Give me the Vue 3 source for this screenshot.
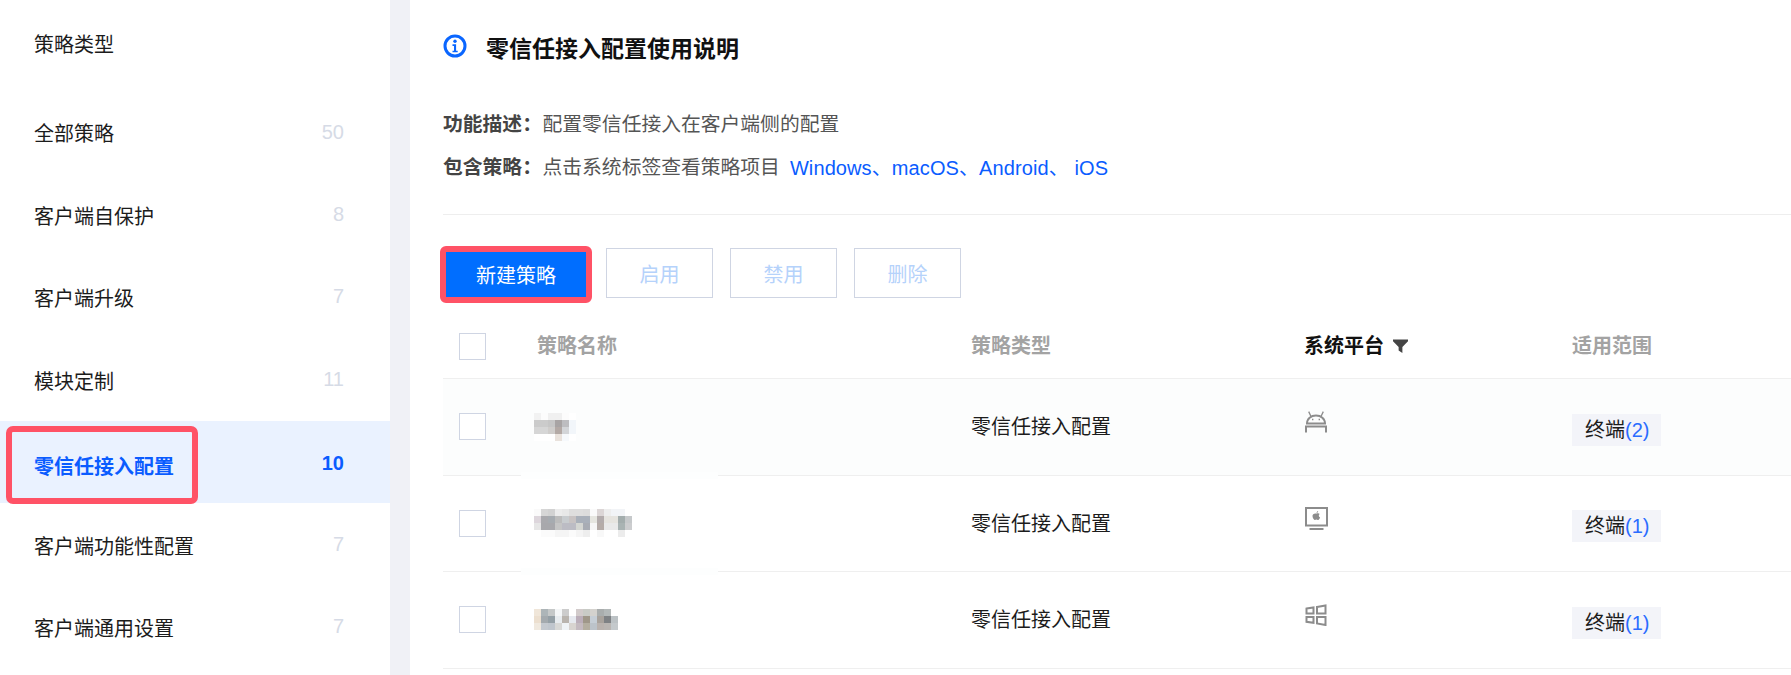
<script setup>
const menu = [
  { name: '全部策略', count: 50 },
  { name: '客户端自保护', count: 8 },
  { name: '客户端升级', count: 7 },
  { name: '模块定制', count: 11 },
  { name: '零信任接入配置', count: 10, active: true },
  { name: '客户端功能性配置', count: 7 },
  { name: '客户端通用设置', count: 7 }
]

// the policy names are pixelated in the screenshot, so each row holds a grid of 7px colour cells
const rows = [
  {
    os: 'android',
    total: 2,
    mosaic: [
      'f2f2f2 fcfcfc f0f0f0 f0f0f0 fcfcfc ffffff',
      'cbcbcb cbcbcb c6c6c6 a8a4a4 bdbdc0 f2f6fa',
      'd6d6d6 d6d6d6 cfcdcb b3a9a5 d3d5d8 f2f6fa',
      'ffffff ffffff ffffff e9e2dc f6f9fc ffffff'
    ]
  },
  {
    os: 'mac',
    total: 1,
    mosaic: [
      'fafafa d6d6d6 d2d2d2 ececec e8e8e8 dedede dedede dcdcdc fafafa dcd6d6 eeeeee f2f4f7 f2f4f7 ffffff',
      'ddd6dc a9a9ad a6abb0 bcbcbc c8cccf c8c3c3 a9b0ba a9b0ba e6e6e0 b3acac e6e4df e6e4df a3adad c6c9cb',
      'e6e6e6 a8a8ac a8a8ac c5c5c5 bcbcc4 bcbcc4 d4d6d2 a8acb4 f7f7f7 b5aca8 e9e9e9 e9e9e9 a9b3b3 cccdcf',
      'ffffff fbfbfb fbfbfb f5f5f5 f5f5f5 fbfbfb f5f5f5 eeeeee ffffff f8f8f8 ffffff ffffff ececec ffffff'
    ]
  },
  {
    os: 'windows',
    total: 1,
    mosaic: [
      'f0e6d9 adb5b8 c5c8c8 f4f6f7 cccccc ffffff d2cbcb c9cbc6 d4d2ce a9adad b3b8b8 ffffff',
      'ecdfcf a4aaae 95a0a6 e8ecef b9b4ae e6e9ef bbaeb9 9f9789 c6ced6 a8a29c 7e8184 bcc2c5',
      'f0e9df c4c9cf c0c6cd d8d8d6 eff3f6 d8d4d0 c4bac0 b4aea0 bcc3ca b9b2ae b9b5b2 c4c9cc'
    ]
  }
]

const cells = (line) => line.split(' ')
</script>

<template>
  <div class="page">
    <aside class="side">
      <div class="side-title">策略类型</div>
      <div v-for="item in menu" :key="item.name" class="side-item" :class="{ active: item.active }">
        <span class="side-name">{{ item.name }}</span>
        <span class="side-count">{{ item.count }}</span>
        <i v-if="item.active" class="mark"></i>
      </div>
    </aside>
    <div class="gutter"></div>
    <main class="main">
      <div class="intro-head">
        <svg class="info" viewBox="0 0 24 24" width="24" height="24">
          <circle cx="12" cy="12" r="10" fill="none" stroke="#0a66ff" stroke-width="3" />
          <circle cx="12" cy="7.200" r="1.700" fill="#0a66ff" />
          <path d="M9.500 10.300h3.600v6.400h1.600v1.600H9.500v-1.600h1.500v-4.800H9.500z" fill="#0a66ff" />
        </svg>
        <h2>零信任接入配置使用说明</h2>
      </div>
      <div class="desc">
        <b>功能描述：</b><span>配置零信任接入在客户端侧的配置</span>
      </div>
      <div class="desc second">
        <b>包含策略：</b><span>点击系统标签查看策略项目</span>
        <a>Windows、macOS、Android、 iOS</a>
      </div>
      <div class="divider"></div>
      <div class="toolbar">
        <span class="primary-wrap"><button type="button" class="btn-primary">新建策略</button></span>
        <button type="button" class="btn-off">启用</button>
        <button type="button" class="btn-off">禁用</button>
        <button type="button" class="btn-off">删除</button>
      </div>
      <div class="table">
        <div class="tr head">
          <div class="cell-check"><span class="check"></span></div>
          <div class="th">策略名称</div>
          <div class="th">策略类型</div>
          <div class="th th-on">
            系统平台
            <svg viewBox="0 0 16 16" width="15" height="14" preserveAspectRatio="none"><path d="M0 0.500h16v2L10 9v7L6 13V9L0 2.500z" fill="#444" /></svg>
          </div>
          <div class="th">适用范围</div>
        </div>
        <div v-for="(row, i) in rows" :key="row.os" class="tr" :class="{ first: i === 0, masked: i < 2 }">
          <div class="cell-check"><span class="check"></span></div>
          <div class="mosaic">
            <div v-for="(line, n) in row.mosaic" :key="n" class="mosaic-line">
              <i v-for="(c, k) in cells(line)" :key="k" :style="{ background: '#' + c }"></i>
            </div>
          </div>
          <div class="type">零信任接入配置</div>
          <div class="os">
            <svg v-if="row.os === 'android'" viewBox="0 0 22 22" width="22" height="22" fill="none" stroke="#8c8c8c">
              <path d="M2 12.500C2 7.500 6 4.600 11 4.600s9 2.900 9 7.900z" stroke-width="2" />
              <path d="M6 5.500 3.700.6M16 5.500 18.300.6" stroke-width="1.300" />
              <path d="M7 8.500h1.400M13.600 8.500H15" stroke-width="1.400" />
              <path d="M1 21.500v-6h20v6" stroke-width="2" />
            </svg>
            <svg v-else-if="row.os === 'mac'" viewBox="0 0 23 23" width="23" height="23" fill="none" stroke="#8c8c8c">
              <rect x="1" y="1" width="21" height="17.500" stroke-width="2" />
              <path d="M4.500 22h14" stroke-width="2" />
              <path d="M11.800 6.600c.8-.5 2.200-.6 2.900.5-1.400.9-1.100 2.700.4 3.300-.5 1.300-1.400 2.600-2.300 2.600-.6 0-.8-.4-1.400-.4s-.9.400-1.400.4c-1 0-2.500-2.200-2.500-4 0-2 1.800-3.100 4.300-2.400zM11.600 6c0-1.100.6-1.800 1.500-2 .1 1-.5 1.900-1.500 2z" fill="#8c8c8c" stroke="none" />
            </svg>
            <svg v-else viewBox="0 0 22 22" width="22" height="22" fill="none" stroke="#8c8c8c" stroke-width="2">
              <path d="M1.500 4.500 8.500 3.400v6.100h-7zM12 2.900 20.500 1.500v8h-8.500zM1.500 13h7v5.800l-7-1zM12 13h8.500v8L12 19.500z" />
            </svg>
          </div>
          <div><span class="tag">终端<em>({{ row.total }})</em></span></div>
        </div>
      </div>
    </main>
  </div>
</template>

<style scoped>
.page {
  display: flex;
  width: 1791px;
  height: 675px;
  overflow: hidden;
  font-family: "Liberation Sans", "Noto Sans CJK SC", sans-serif;
  color: #1c1c1c;
  background: #fff;
}

.side {
  flex: 0 0 390px;
  font-size: 20px;
}

.side-title {
  height: 91px;
  padding: 33px 0 0 34px;
  box-sizing: border-box;
  line-height: 24px;
}

.side-item {
  position: relative;
  display: flex;
  justify-content: space-between;
  align-items: center;
  height: 82.400px;
  padding: 0 46px 0 34px;
  box-sizing: border-box;
}

.side-name {
  position: relative;
  top: 1px;
}

.side-item:nth-of-type(2) .side-name {
  top: 0;
}

.side-count {
  color: #d6dbe6;
}

.side-item.active {
  background: #eaf2ff;
  color: #0a5cff;
  font-weight: 700;
}

.side-item.active .side-name {
  top: 4px;
}

.side-item.active .side-count {
  position: relative;
  top: 2px;
  color: #0a5cff;
}

.mark {
  position: absolute;
  left: 6px;
  top: 5px;
  width: 192px;
  height: 78px;
  box-sizing: border-box;
  border: 6px solid #ff5266;
  border-radius: 7px;
}

.gutter {
  flex: 0 0 20px;
  background: #f0f1f6;
}

.main {
  flex: 1;
  min-width: 0;
  padding-left: 33px;
}

.intro-head {
  display: flex;
  align-items: center;
  gap: 19px;
  height: 92px;
}

.intro-head h2 {
  margin: 2px 0 0;
  font-size: 23px;
  font-weight: 700;
  color: #111;
}

.desc {
  display: flex;
  align-items: center;
  height: 30px;
  margin-top: 15px;
  font-size: 19.800px;
  color: #555;
}

.desc b {
  width: 99.500px;
  color: #444;
}

.desc.second {
  margin-top: 13px;
}

.desc a {
  margin: 3px 0 0 10px;
  color: #0a5cff;
  font-size: 20px;
  letter-spacing: 0.1px;
}

.divider {
  height: 1px;
  margin-top: 34px;
  background: #eeeeee;
}

.toolbar {
  display: flex;
  align-items: flex-start;
  gap: 17px;
  margin: 31px 0 0 -3px;
}

.primary-wrap {
  display: block;
  margin-right: -3px;
  border: 6px solid #ff5266;
  border-radius: 6px;
}

.btn-primary {
  display: block;
  width: 140px;
  height: 45px;
  border: 0;
  background: #006eff;
  color: #fff;
  font: inherit;
  font-size: 20px;
}

.btn-off {
  width: 107px;
  height: 50px;
  margin-top: 2px;
  border: 1px solid #cfd5e3;
  background: #fff;
  color: #b5d2fb;
  font: inherit;
  font-size: 20px;
}

.table {
  margin-top: 11px;
}

.tr {
  position: relative;
  display: grid;
  grid-template-columns: 94px 434px 334px 267px 1fr;
  align-items: center;
  height: 96.500px;
  box-sizing: border-box;
  border-bottom: 1px solid #efefef;
  font-size: 20px;
}

.tr.head {
  height: 65px;
  color: #a3a3a3;
  font-weight: 700;
}

.th {
  margin-top: -4px;
}

.tr.first {
  background: #fcfdfd;
}

.tr.masked::after {
  content: "";
  position: absolute;
  left: 78px;
  width: 197px;
  bottom: -4px;
  height: 7px;
  background: #fdfefe;
}

.cell-check {
  padding-left: 16px;
  display: flex;
}

.check {
  width: 27px;
  height: 27px;
  box-sizing: border-box;
  border: 1px solid #cfd5e3;
  background: #fff;
}

.th-on {
  display: flex;
  align-items: center;
  gap: 9px;
  margin-left: -1px;
  color: #111;
}

.th-on svg {
  margin-top: 4px;
}

.mosaic {
  margin-left: -3px;
}

.mosaic-line {
  display: flex;
  height: 7px;
}

.mosaic-line i {
  width: 7px;
  height: 7px;
}

.type {
  margin-top: -2px;
}

.os {
  display: flex;
  margin-top: -10px;
}

.tag {
  display: inline-block;
  width: 89px;
  height: 32px;
  margin-top: 6px;
  padding-left: 13px;
  box-sizing: border-box;
  background: #f3f4f9;
  line-height: 32px;
}

.tag em {
  font-style: normal;
  color: #2b6cff;
}
</style>
